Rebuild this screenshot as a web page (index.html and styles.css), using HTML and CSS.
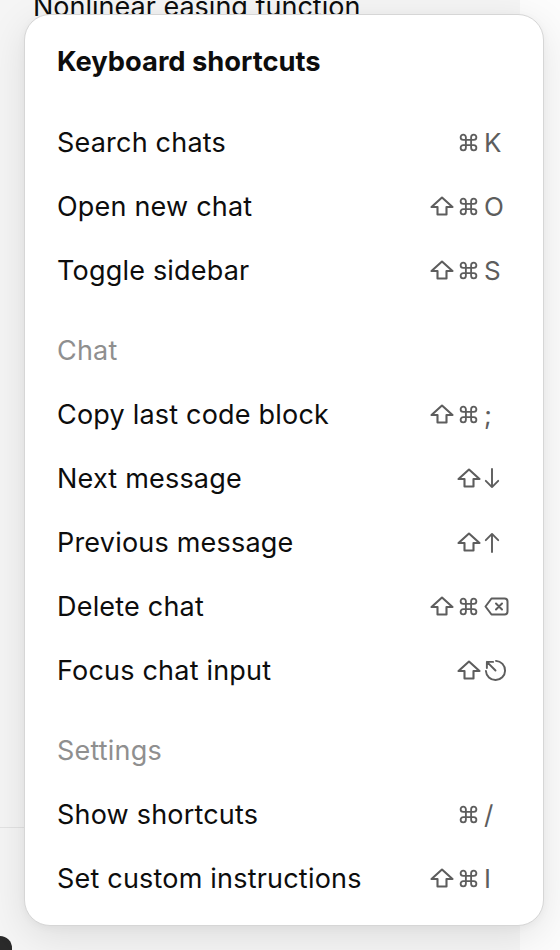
FILE: index.html
```html
<!DOCTYPE html>
<html lang="en">
<head>
    <meta charset="UTF-8">
    <meta name="viewport" content="width=device-width, initial-scale=1.0">
    <title>Keyboard shortcuts</title>
    <link rel="stylesheet" href="styles.css">
</head>
<body>
    <div class="page">
        <aside class="sidebar">
            <div class="chat-item">Nonlinear easing function</div>
            <div class="sidebar-footer">
                <div class="avatar"></div>
            </div>
        </aside>
        <main class="main"></main>
    </div>

    <div class="modal">
        <h2 class="modal-title">Keyboard shortcuts</h2>

        <div class="row">
            <span>Search chats</span>
            <span class="keys">
                <span class="key"><svg class="ico cmd" viewBox="0 0 24 24"><path d="M18 3a3 3 0 0 0-3 3v12a3 3 0 0 0 3 3 3 3 0 0 0 3-3 3 3 0 0 0-3-3H6a3 3 0 0 0-3 3 3 3 0 0 0 3 3 3 3 0 0 0 3-3V6a3 3 0 0 0-3-3 3 3 0 0 0-3 3 3 3 0 0 0 3 3h12a3 3 0 0 0 3-3 3 3 0 0 0-3-3z"/></svg></span>
                <span class="key">K</span>
            </span>
        </div>
        <div class="row">
            <span>Open new chat</span>
            <span class="keys">
                <span class="key"><svg class="ico shift" viewBox="0 0 24 20"><path d="M12 1.5L1.5 11H7.5V18.5H16.5V11H22.5Z"/></svg></span>
                <span class="key"><svg class="ico cmd" viewBox="0 0 24 24"><path d="M18 3a3 3 0 0 0-3 3v12a3 3 0 0 0 3 3 3 3 0 0 0 3-3 3 3 0 0 0-3-3H6a3 3 0 0 0-3 3 3 3 0 0 0 3 3 3 3 0 0 0 3-3V6a3 3 0 0 0-3-3 3 3 0 0 0-3 3 3 3 0 0 0 3 3h12a3 3 0 0 0 3-3 3 3 0 0 0-3-3z"/></svg></span>
                <span class="key">O</span>
            </span>
        </div>
        <div class="row">
            <span>Toggle sidebar</span>
            <span class="keys">
                <span class="key"><svg class="ico shift" viewBox="0 0 24 20"><path d="M12 1.5L1.5 11H7.5V18.5H16.5V11H22.5Z"/></svg></span>
                <span class="key"><svg class="ico cmd" viewBox="0 0 24 24"><path d="M18 3a3 3 0 0 0-3 3v12a3 3 0 0 0 3 3 3 3 0 0 0 3-3 3 3 0 0 0-3-3H6a3 3 0 0 0-3 3 3 3 0 0 0 3 3 3 3 0 0 0 3-3V6a3 3 0 0 0-3-3 3 3 0 0 0-3 3 3 3 0 0 0 3 3h12a3 3 0 0 0 3-3 3 3 0 0 0-3-3z"/></svg></span>
                <span class="key">S</span>
            </span>
        </div>

        <div class="section">Chat</div>
        <div class="row">
            <span>Copy last code block</span>
            <span class="keys">
                <span class="key"><svg class="ico shift" viewBox="0 0 24 20"><path d="M12 1.5L1.5 11H7.5V18.5H16.5V11H22.5Z"/></svg></span>
                <span class="key"><svg class="ico cmd" viewBox="0 0 24 24"><path d="M18 3a3 3 0 0 0-3 3v12a3 3 0 0 0 3 3 3 3 0 0 0 3-3 3 3 0 0 0-3-3H6a3 3 0 0 0-3 3 3 3 0 0 0 3 3 3 3 0 0 0 3-3V6a3 3 0 0 0-3-3 3 3 0 0 0-3 3 3 3 0 0 0 3 3h12a3 3 0 0 0 3-3 3 3 0 0 0-3-3z"/></svg></span>
                <span class="key">;</span>
            </span>
        </div>
        <div class="row">
            <span>Next message</span>
            <span class="keys">
                <span class="key"><svg class="ico shift" viewBox="0 0 24 20"><path d="M12 1.5L1.5 11H7.5V18.5H16.5V11H22.5Z"/></svg></span>
                <span class="key"><svg class="ico arrow" viewBox="0 0 16 22"><path d="M8 1V20M1.5 13.5L8 20L14.5 13.5"/></svg></span>
            </span>
        </div>
        <div class="row">
            <span>Previous message</span>
            <span class="keys">
                <span class="key"><svg class="ico shift" viewBox="0 0 24 20"><path d="M12 1.5L1.5 11H7.5V18.5H16.5V11H22.5Z"/></svg></span>
                <span class="key"><svg class="ico arrow" viewBox="0 0 16 22"><path d="M8 21V2M1.5 8.5L8 2L14.5 8.5"/></svg></span>
            </span>
        </div>
        <div class="row">
            <span>Delete chat</span>
            <span class="keys">
                <span class="key"><svg class="ico shift" viewBox="0 0 24 20"><path d="M12 1.5L1.5 11H7.5V18.5H16.5V11H22.5Z"/></svg></span>
                <span class="key"><svg class="ico cmd" viewBox="0 0 24 24"><path d="M18 3a3 3 0 0 0-3 3v12a3 3 0 0 0 3 3 3 3 0 0 0 3-3 3 3 0 0 0-3-3H6a3 3 0 0 0-3 3 3 3 0 0 0 3 3 3 3 0 0 0 3-3V6a3 3 0 0 0-3-3 3 3 0 0 0-3 3 3 3 0 0 0 3 3h12a3 3 0 0 0 3-3 3 3 0 0 0-3-3z"/></svg></span>
                <span class="key"><svg class="ico del" viewBox="0 0 25 19"><path d="M7.5 1.5H20.5a3 3 0 0 1 3 3V14.5a3 3 0 0 1-3 3H7.5L1.5 9.5Z"/><path d="M12 6.5l6 6M18 6.5l-6 6"/></svg></span>
            </span>
        </div>
        <div class="row">
            <span>Focus chat input</span>
            <span class="keys">
                <span class="key"><svg class="ico shift" viewBox="0 0 24 20"><path d="M12 1.5L1.5 11H7.5V18.5H16.5V11H22.5Z"/></svg></span>
                <span class="key"><svg class="ico esc" viewBox="0 0 24 24"><path d="M12.5 2A10 10 0 1 1 2 12.5"/><path d="M12 12L3 3M3 9.5V3H9.5"/></svg></span>
            </span>
        </div>

        <div class="section">Settings</div>
        <div class="row">
            <span>Show shortcuts</span>
            <span class="keys">
                <span class="key"><svg class="ico cmd" viewBox="0 0 24 24"><path d="M18 3a3 3 0 0 0-3 3v12a3 3 0 0 0 3 3 3 3 0 0 0 3-3 3 3 0 0 0-3-3H6a3 3 0 0 0-3 3 3 3 0 0 0 3 3 3 3 0 0 0 3-3V6a3 3 0 0 0-3-3 3 3 0 0 0-3 3 3 3 0 0 0 3 3h12a3 3 0 0 0 3-3 3 3 0 0 0-3-3z"/></svg></span>
                <span class="key">/</span>
            </span>
        </div>
        <div class="row">
            <span>Set custom instructions</span>
            <span class="keys">
                <span class="key"><svg class="ico shift" viewBox="0 0 24 20"><path d="M12 1.5L1.5 11H7.5V18.5H16.5V11H22.5Z"/></svg></span>
                <span class="key"><svg class="ico cmd" viewBox="0 0 24 24"><path d="M18 3a3 3 0 0 0-3 3v12a3 3 0 0 0 3 3 3 3 0 0 0 3-3 3 3 0 0 0-3-3H6a3 3 0 0 0-3 3 3 3 0 0 0 3 3 3 3 0 0 0 3-3V6a3 3 0 0 0-3-3 3 3 0 0 0-3 3 3 3 0 0 0 3 3h12a3 3 0 0 0 3-3 3 3 0 0 0-3-3z"/></svg></span>
                <span class="key">I</span>
            </span>
        </div>
    </div>
</body>
</html>
```

FILE: styles.css
```css
body {
    margin: 0;
    font-family: 'Inter', 'Liberation Sans', sans-serif;
    background-color: #fcfcfc;
    color: #0d0d0d;
    overflow: hidden;
}

.page {
    display: flex;
    height: 100vh;
}

.sidebar {
    width: 520px;
    flex-shrink: 0;
    background-color: #f5f5f5;
    display: flex;
    flex-direction: column;
}

.chat-item {
    margin-top: -9px;
    padding-left: 33px;
    font-size: 27px;
    line-height: 32px;
    white-space: nowrap;
}

.sidebar-footer {
    margin-top: auto;
    height: 122px;
    border-top: 1px solid #e3e3e3;
    display: flex;
    align-items: flex-end;
}

.avatar {
    width: 12px;
    height: 14px;
    background-color: #2a2a2a;
    border-top-right-radius: 12px;
}

.main {
    flex: 1;
}

/* the shortcuts dialog sits over the page */
.modal {
    position: absolute;
    left: 24px;
    top: 14px;
    width: 520px;
    box-sizing: border-box;
    padding: 15px 32px;
    background-color: #fff;
    border: 1px solid #d6d6d6;
    border-radius: 26px;
    box-shadow: 0px 10px 40px rgba(0, 0, 0, 0.10), 0px 2px 8px rgba(0, 0, 0, 0.04);
}

.modal-title {
    margin: 0 0 16px 0;
    height: 64px;
    line-height: 64px;
    font-size: 27.3px;
    font-weight: 700;
}

.row,
.section {
    height: 64px;
    display: flex;
    align-items: center;
    justify-content: space-between;
    font-size: 27px;
    letter-spacing: 0.2px;
    white-space: nowrap;
}

.section {
    margin-top: 16px;
    color: #8f8f8f;
}

.keys {
    display: flex;
    color: #5d5d5d;
    font-size: 26px;
    letter-spacing: 0;
}

.key {
    width: 27px;
    display: flex;
    align-items: center;
}

.ico {
    fill: none;
    stroke: #5d5d5d;
    stroke-width: 2;
    stroke-linejoin: round;
    stroke-linecap: round;
}

.ico.shift {
    width: 24px;
    height: 20px;
    stroke-width: 2.1;
}

.ico.cmd {
    width: 23px;
    height: 21px;
    stroke-width: 2.1;
}

.ico.arrow {
    width: 16px;
    height: 21px;
}

.ico.del {
    width: 25px;
    height: 19px;
}

.ico.esc {
    width: 23px;
    height: 23px;
}
```
